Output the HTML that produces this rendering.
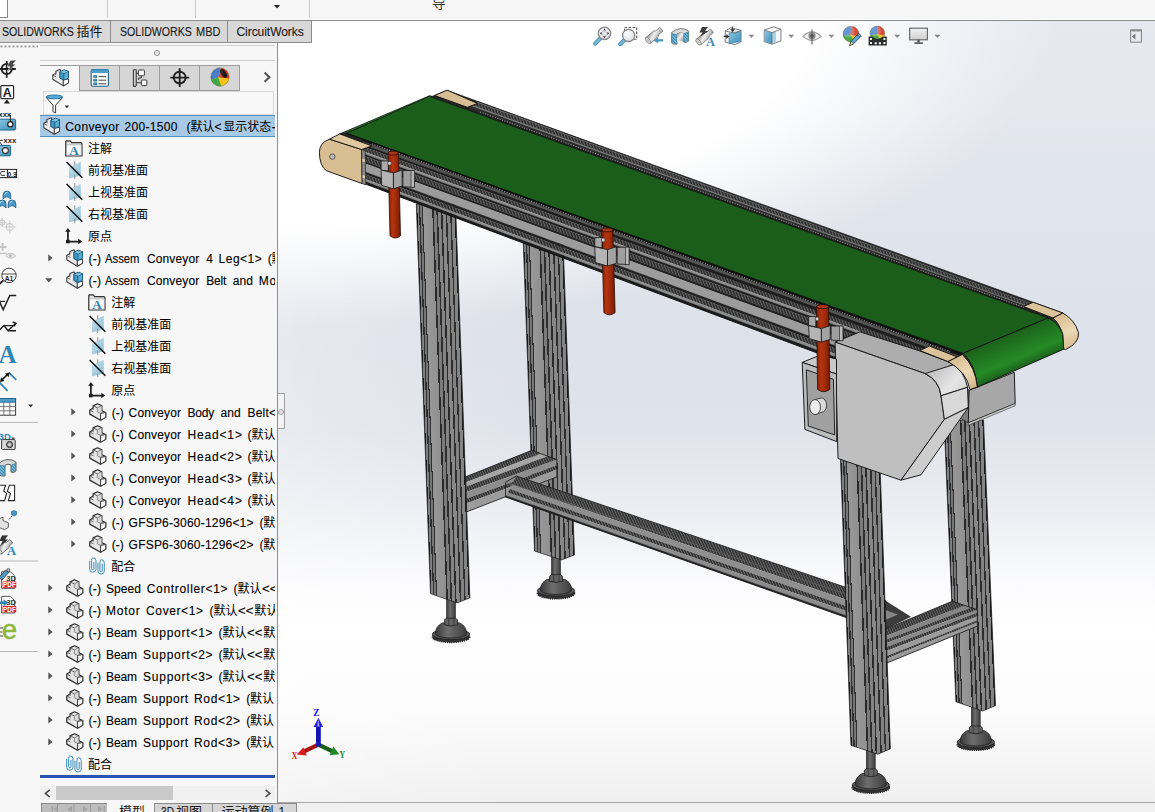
<!DOCTYPE html>
<html><head><meta charset="utf-8"><title>SOLIDWORKS</title><style>
html,body{margin:0;padding:0}
html{overflow:hidden;width:1155px;height:812px}
body{width:1155px;height:812px;overflow:hidden;position:relative;background:#f7f7f7;font-family:"Liberation Sans",sans-serif;font-size:12px}
.t{position:absolute;white-space:pre;line-height:normal;transform-origin:0 50%;-webkit-text-stroke:0.12px currentColor}
.a{position:absolute}
svg{position:absolute;overflow:visible}
</style></head><body><div class="a" style="left:0;top:0;width:1155px;height:812px;overflow:hidden">
<svg width="0" height="0" style="left:0;top:0"><defs>
<symbol id="i-part" viewBox="0 0 18 19" overflow="visible">
 <path d="M0.8 7.2 L4.2 5.2 L4.2 3 L8.8 0.8 L13.2 2.8 L13.2 8 L17.2 9.8 L17.2 14.6 L11.8 17.8 L0.8 11.4Z" fill="#e6e6e6" stroke="#2c2c2c" stroke-width="1.3" stroke-linejoin="round"/>
 <path d="M4.2 3 L8.6 5 L13.2 2.8 M8.6 5 L8.6 9 L12 10.6 L17.2 9.8 M12 10.6 L11.8 17.8 M0.8 7.2 L4.6 9.2 M4.2 5.2L4.2 7" fill="none" stroke="#555" stroke-width="0.9"/>
 <path d="M8.6 5 L13.2 2.8 L13.2 8 L12 10.6 L8.6 9Z" fill="#d2d2d2" opacity=".7"/>
 <path d="M12 10.6L17.2 9.8L17.2 14.6L11.8 17.8Z" fill="#f6f6f6"/>
 <path d="M12 10.6L17.2 9.8L17.2 14.6L11.8 17.8Z" fill="none" stroke="#3c3c3c" stroke-width="1"/>
</symbol>
<symbol id="i-asm" viewBox="0 0 18 19" overflow="visible">
 <path d="M0.8 6.6 L4 4.6 L4 2.6 L8 0.9 L9 1.3 L9 9 L17 11 L17 14.6 L11.6 17.8 L0.8 11Z" fill="#ededed" stroke="#3c3c3c" stroke-width="1.1" stroke-linejoin="round"/>
 <path d="M11.6 11.2 L11.6 17.8 M0.8 6.6 L4.4 8.6 M4 4.6 L4 6.4" fill="none" stroke="#555" stroke-width="0.9"/>
 <path d="M11.6 11.4L17 10.6L17 14.6L11.6 17.8Z" fill="#fafafa" stroke="#3c3c3c" stroke-width="1"/>
 <path d="M8 3.4 L12.6 1.2 L17 2.8 L17 9.6 L12.2 11.8 L8 9.8Z" fill="#3f97c4" stroke="#17506f" stroke-width="1" stroke-linejoin="round"/>
 <path d="M8 3.4 L12.4 5.2 L17 2.8 M12.4 5.2 L12.2 11.8" fill="none" stroke="#17506f" stroke-width="0.9"/>
 <path d="M8.4 3.5 L12.6 1.7 L16.4 2.9 L12.4 4.8Z" fill="#7cc3e2"/>
 <path d="M12.8 5.6L16.6 3.6L16.6 9.3L12.7 11.1Z" fill="#5aaed6"/>
</symbol>
<symbol id="i-folder" viewBox="0 0 19 18" overflow="visible">
 <path d="M0.8 16.4 L0.8 1.6 Q0.8 0.8 1.6 0.8 L5.4 0.8 L6.8 2.6 L16 2.6 Q17.4 2.6 17.4 4 L17.4 16.4Z" fill="#e2e2e2" stroke="#333" stroke-width="1.3" stroke-linejoin="round"/>
 <path d="M1.6 5 L16.8 5 L16.8 15.8 L1.6 15.8Z" fill="#f9f9f9" stroke="#9a9a9a" stroke-width="0.6"/>
 <text x="9.2" y="15.2" font-family="Liberation Serif" font-weight="bold" font-size="13.5" text-anchor="middle" fill="#2f84ad">A</text>
</symbol>
<symbol id="i-plane" viewBox="0 0 18 19" overflow="visible">
 <defs><linearGradient id="pg" x1="0" y1="0" x2="1" y2="1"><stop offset="0" stop-color="#c4e0ec"/><stop offset="1" stop-color="#8fc0d6"/></linearGradient></defs>
 <path d="M3 6.8 L15.2 0.8 L15.2 14.8 L3 18Z" fill="url(#pg)"/>
 <path d="M9 0.2V4.4M9 14V18.4" stroke="#8a8a8a" stroke-width="1"/>
 <path d="M0.6 1 L16.8 17.2" stroke="#111" stroke-width="1.5"/>
</symbol>
<symbol id="i-origin" viewBox="0 0 18 18" overflow="visible">
 <path d="M3 1 L5.8 5 H3.9 V14.2 H13.6 V12.2 L17.8 15 L13.6 17.8 V15.9 H2.1 V5 H0.2Z" fill="#1e1e1e"/>
 <rect x="1" y="13.2" width="3.8" height="3.6" fill="#1e1e1e"/>
</symbol>
<symbol id="i-clips" viewBox="0 0 17 19" overflow="visible">
 <g fill="none" stroke="#2580b2" stroke-width="0.95">
  <path d="M5.2 5.2 V12.4 Q5.2 13.6 4 13.6 Q2.8 13.6 2.8 12.4 V3.8 Q2.8 0.8 4.1 0.8 Q7.4 0.8 7.4 3.8 V13.2 Q7.4 16 4 16 Q0.7 16 0.7 13.2 V4"/>
  <path d="M14 7.2 V14.4 Q14 15.6 12.8 15.6 Q11.6 15.6 11.6 14.4 V5.8 Q11.6 2.8 12.9 2.8 Q16.2 2.8 16.2 5.8 V15.2 Q16.2 18 12.8 18 Q9.5 18 9.5 15.2 V6"/>
 </g>
</symbol>

<clipPath id="treeclip"><rect x="40" y="100" width="235" height="680"/></clipPath>
<clipPath id="botclip"><rect x="0" y="803" width="400" height="9"/></clipPath>
</defs></svg>
<div class="a" style="left:0px;top:0px;width:1155px;height:20px;background:#f6f6f6;"></div><div class="a" style="left:0px;top:0px;width:7px;height:17px;background:#ffffff;border-right:1px solid #8a8a8a;border-bottom:1px solid #8a8a8a;"></div><div class="a" style="left:107px;top:0px;width:1px;height:18px;background:#c9c9c9;"></div><div class="a" style="left:195px;top:0px;width:1px;height:18px;background:#c9c9c9;"></div><div class="a" style="left:309px;top:0px;width:1px;height:18px;background:#c9c9c9;"></div><svg style="left:274px;top:5px" width="6" height="4"><path d="M0 0h6l-3 3.5z" fill="#222"/></svg><div class="a" style="left:0px;top:19px;width:1155px;height:1px;background:#fdfdfd;"></div><div class="a" style="left:0px;top:20px;width:1155px;height:1px;background:#8c8c8c;"></div><svg style="left:0;top:45px" width="38" height="3"><path d="M0.5 1.5H38" stroke="#9a9a9a" stroke-width="2" stroke-dasharray="2 2"/></svg><div class="a" style="left:40px;top:45px;width:235px;height:1px;background:#d0d0d0;"></div><div class="a" style="left:40px;top:60px;width:235px;height:1px;background:#cfcfcf;"></div><svg style="left:153px;top:49px" width="8" height="8"><circle cx="4" cy="4" r="2.6" fill="#e4e4e4" stroke="#9c9c9c" stroke-width="1"/></svg><div class="a" style="left:40px;top:65px;width:200px;height:1px;background:#9c9c9c;"></div><div class="a" style="left:80px;top:66px;width:160px;height:24px;background:#d6d6d6;"></div><div class="a" style="left:80px;top:90px;width:160px;height:1px;background:#9c9c9c;"></div><div class="a" style="left:79px;top:66px;width:1px;height:25px;background:#9c9c9c;"></div><div class="a" style="left:119px;top:66px;width:1px;height:25px;background:#9c9c9c;"></div><div class="a" style="left:159px;top:66px;width:1px;height:25px;background:#9c9c9c;"></div><div class="a" style="left:199px;top:66px;width:1px;height:25px;background:#9c9c9c;"></div><div class="a" style="left:239px;top:66px;width:1px;height:25px;background:#9c9c9c;"></div><div class="a" style="left:43px;top:91px;width:231px;height:24px;background:#f8f8f8;border:1px solid #d9d9d9;box-sizing:border-box;"></div><div class="a" style="left:277px;top:43px;width:1px;height:760px;background:#8e8e8e;"></div><div class="a" style="left:40px;top:115px;width:235px;height:22px;background:#a9cae6;border-top:1px solid #4f93c8;border-bottom:1px solid #4f93c8;box-sizing:border-box;"></div><div class="a" style="left:40px;top:775px;width:235px;height:3px;background:#2a52b4;"></div><div class="a" style="left:40px;top:786px;width:235px;height:14px;background:#f0f0f0;"></div><div class="a" style="left:56px;top:786px;width:117px;height:14px;background:#c9c9c9;"></div><svg style="left:44px;top:789px" width="8" height="9"><path d="M5.6 0.8 L1.4 4.4 L5.6 8" fill="none" stroke="#4a4a4a" stroke-width="1.6"/></svg><svg style="left:264px;top:789px" width="8" height="9"><path d="M1.6 0.8 L5.8 4.4 L1.6 8" fill="none" stroke="#4a4a4a" stroke-width="1.6"/></svg><div class="a" style="left:278px;top:802px;width:877px;height:1px;background:#a6a6a6;"></div><div class="a" style="left:278px;top:803px;width:877px;height:9px;background:#f0f0f0;"></div><div class="a" style="left:41px;top:803px;width:66px;height:9px;background:#bdbdbd;border-top:1px solid #8a8a8a;border-left:1px solid #8a8a8a;box-sizing:border-box;"></div><svg style="left:41px;top:803px" width="66" height="9"><g fill="#a3a3a3"><path d="M12 3v6h-1.5v-6zM17 3v6l-4.5-3zM31 3v6l-5-3zM42 3l5 3-5 3zM57 3l4.5 3l-4.5 3zM62.5 3h1.5v6h-1.5z"/></g><path d="M16.5 0V9M33 0V9M49.5 0V9" stroke="#9a9a9a"/></svg><div class="a" style="left:107px;top:803px;width:47px;height:9px;background:#f7f7f7;"></div><div class="a" style="left:154px;top:803px;width:59px;height:9px;background:#d6d6d6;border:1px solid #8c8c8c;border-bottom:none;box-sizing:border-box;"></div><div class="a" style="left:213px;top:803px;width:84px;height:9px;background:#d6d6d6;border:1px solid #8c8c8c;border-left:none;border-bottom:none;box-sizing:border-box;"></div><span class="t" style="left:160.5px;top:804.74px;font-size:12px;color:#1a1a1a;transform:scaleX(0.8473);">3D</span><span class="t" style="left:278.5px;top:804.74px;font-size:12px;color:#1a1a1a;">1</span>
<div class="a" style="left:278px;top:21px;width:877px;height:781px;
background:
 radial-gradient(ellipse 780px 305px at 0 0, #fff 0%, #fff 68%, rgba(255,255,255,0) 100%),
 linear-gradient(90deg, rgba(255,255,255,.28) 0%, rgba(255,255,255,.14) 12%, rgba(255,255,255,0) 28%),
 linear-gradient(180deg,#e6e9f0 0%,#e1e5ed 20%,#dde1ea 42%,#dfe3eb 52%,#eceef3 63%,#fbfbfd 72%,#ffffff 78%,#fcfcfc 88%,#f0f0f0 100%);"></div><div class="a" style="left:278px;top:393px;width:7px;height:36px;background:#f3f3f3;border:1px solid #a0a0a0;border-left:none;box-sizing:border-box;"></div><svg style="left:277px;top:408px" width="8" height="8"><circle cx="4" cy="4" r="2.4" fill="#e8e8e8" stroke="#9c9c9c" stroke-width="1"/></svg>
<svg style="left:0;top:0" width="1155" height="812" viewBox="0 0 1155 812"><defs><linearGradient id="legg" x1="0" y1="0" x2="1" y2="0"><stop offset="0" stop-color="#1a1a1a"/><stop offset="0.022" stop-color="#1a1a1a"/><stop offset="0.022" stop-color="#808080"/><stop offset="0.062" stop-color="#808080"/><stop offset="0.062" stop-color="#303030"/><stop offset="0.095" stop-color="#303030"/><stop offset="0.095" stop-color="#767676"/><stop offset="0.138" stop-color="#767676"/><stop offset="0.138" stop-color="#2e2e2e"/><stop offset="0.165" stop-color="#2e2e2e"/><stop offset="0.165" stop-color="#989898"/><stop offset="0.4" stop-color="#909090"/><stop offset="0.4" stop-color="#2a2a2a"/><stop offset="0.438" stop-color="#2a2a2a"/><stop offset="0.438" stop-color="#7c7c7c"/><stop offset="0.505" stop-color="#7c7c7c"/><stop offset="0.505" stop-color="#2e2e2e"/><stop offset="0.545" stop-color="#2e2e2e"/><stop offset="0.545" stop-color="#848484"/><stop offset="0.62" stop-color="#848484"/><stop offset="0.62" stop-color="#2a2a2a"/><stop offset="0.658" stop-color="#2a2a2a"/><stop offset="0.658" stop-color="#888888"/><stop offset="0.74" stop-color="#888888"/><stop offset="0.74" stop-color="#2e2e2e"/><stop offset="0.778" stop-color="#2e2e2e"/><stop offset="0.778" stop-color="#828282"/><stop offset="0.855" stop-color="#828282"/><stop offset="0.855" stop-color="#2e2e2e"/><stop offset="0.89" stop-color="#2e2e2e"/><stop offset="0.89" stop-color="#848484"/><stop offset="0.968" stop-color="#848484"/><stop offset="0.968" stop-color="#1a1a1a"/><stop offset="1" stop-color="#1a1a1a"/></linearGradient><linearGradient id="rodg" x1="0" y1="0" x2="1" y2="0"><stop offset="0" stop-color="#801f05"/><stop offset="0.35" stop-color="#b43510"/><stop offset="0.6" stop-color="#a42c0b"/><stop offset="1" stop-color="#741b04"/></linearGradient><linearGradient id="beltend" gradientUnits="userSpaceOnUse" x1="1003" y1="336" x2="1018" y2="371"><stop offset="0" stop-color="#1b5f1b"/><stop offset="0.45" stop-color="#227d22"/><stop offset="0.7" stop-color="#258a25"/><stop offset="1" stop-color="#1a5a1a"/></linearGradient><linearGradient id="capg" gradientUnits="userSpaceOnUse" x1="1060" y1="316" x2="1074" y2="348"><stop offset="0" stop-color="#d8bd92"/><stop offset="0.5" stop-color="#ecd9b6"/><stop offset="1" stop-color="#d3b88d"/></linearGradient><linearGradient id="capg2" gradientUnits="userSpaceOnUse" x1="958" y1="358" x2="972" y2="388"><stop offset="0" stop-color="#d8bd92"/><stop offset="0.5" stop-color="#ecd9b6"/><stop offset="1" stop-color="#d3b88d"/></linearGradient><linearGradient id="chamf" gradientUnits="userSpaceOnUse" x1="935" y1="370" x2="962" y2="395"><stop offset="0" stop-color="#c4c4c4"/><stop offset="0.6" stop-color="#e6e6e6"/><stop offset="1" stop-color="#d2d2d2"/></linearGradient><linearGradient id="footg" x1="0" y1="0" x2="1" y2="0"><stop offset="0" stop-color="#3a3a3a"/><stop offset="0.4" stop-color="#6e6e6e"/><stop offset="1" stop-color="#3c3c3c"/></linearGradient><pattern id="hx" width="2.6" height="2.6" patternUnits="userSpaceOnUse" patternTransform="rotate(-20)"><rect width="2.6" height="2.6" fill="#2b2b2b"/><rect width="1.1" height="2.6" fill="#626262"/></pattern><pattern id="hx2" width="2.4" height="2.4" patternUnits="userSpaceOnUse" patternTransform="rotate(-25)"><rect width="2.4" height="2.4" fill="#2e2e2e"/><rect width="1.0" height="2.4" fill="#6a6a6a"/></pattern><clipPath id="vpclip"><rect x="278" y="21" width="877" height="781"/></clipPath></defs><g clip-path="url(#vpclip)"><rect x="971.4" y="705" width="8.8" height="23.6" fill="url(#footg)" stroke="#1a1a1a" stroke-width="0.6"/><ellipse cx="975.8" cy="744.7" rx="18.7" ry="5.6" fill="#333" stroke="#222" stroke-width="1.4" stroke-dasharray="1.2 0.9"/><ellipse cx="975.8" cy="742.1" rx="18.7" ry="5.4" fill="#5c5c5c" stroke="#1c1c1c" stroke-width="0.8"/><path d="M960.1999999999999,741.5 Q960.1999999999999,734.1 967.1999999999999,730.7 L984.4,730.7 Q991.4,734.1 991.4,741.5 A15.6,4.4 0 0 1 960.1999999999999,741.5Z" fill="url(#footg)" stroke="#1c1c1c" stroke-width="0.8"/><path d="M969.3,727.6 L971.4,726.0 H980.1999999999999 L982.3,727.6 V732.6 Q975.8,735.0 969.3,732.6Z" fill="#626262" stroke="#1c1c1c" stroke-width="0.8"/><path d="M973.4,726.8000000000001V733.8000000000001M978.8,726.8000000000001V733.6" stroke="#2a2a2a" stroke-width="0.6"/><g transform="matrix(1 0 0.042 1 926.46 0)"><polygon points="0,420 39.4,420 39.4,705.6 26.4,711.0 0,701.7" fill="url(#legg)" stroke="#1a1a1a" stroke-width="0.7"/></g><rect x="551.6" y="554" width="8.8" height="23.2" fill="url(#footg)" stroke="#1a1a1a" stroke-width="0.6"/><ellipse cx="556.0" cy="593.3000000000001" rx="18.7" ry="5.6" fill="#333" stroke="#222" stroke-width="1.4" stroke-dasharray="1.2 0.9"/><ellipse cx="556.0" cy="590.7" rx="18.7" ry="5.4" fill="#5c5c5c" stroke="#1c1c1c" stroke-width="0.8"/><path d="M540.4,590.1 Q540.4,582.7 547.4,579.3000000000001 L564.6,579.3000000000001 Q571.6,582.7 571.6,590.1 A15.6,4.4 0 0 1 540.4,590.1Z" fill="url(#footg)" stroke="#1c1c1c" stroke-width="0.8"/><path d="M549.5,576.2 L551.6,574.6 H560.4 L562.5,576.2 V581.2 Q556.0,583.6 549.5,581.2Z" fill="#626262" stroke="#1c1c1c" stroke-width="0.8"/><path d="M553.6,575.4000000000001V582.4000000000001M559.0,575.4000000000001V582.2" stroke="#2a2a2a" stroke-width="0.6"/><g transform="matrix(1 0 0.0365 1 514.43 0)"><polygon points="0,243 39.8,243 39.8,554.9 26.7,559.9 0,551.0" fill="url(#legg)" stroke="#1a1a1a" stroke-width="0.7"/></g><polygon points="465.7,476.8 531.9,450.3 540.9,453.7 465.7,482.4" fill="url(#hx2)"/><polygon points="465.7,482.4 540.9,453.7 547.9,456.3 465.7,486.7" fill="#a6a6a6" stroke="#a6a6a6" stroke-width="0.3"/><polygon points="465.7,486.7 547.9,456.3 556.9,459.6 465.7,492.3" fill="url(#hx2)"/><polygon points="465.7,492.3 556.9,459.6 556.9,465.5 465.7,499.1" fill="#8e8e8e" stroke="#8e8e8e" stroke-width="0.3"/><polygon points="465.7,499.1 556.9,465.5 556.9,469.6 465.7,503.8" fill="url(#hx2)"/><polygon points="465.7,503.8 556.9,469.6 556.9,476.8 465.7,512.2" fill="#9c9c9c" stroke="#9c9c9c" stroke-width="0.3"/><polygon points="465.7,476.8 531.9,450.3 556.9,459.6 556.9,476.8 465.7,512.2" fill="none" stroke="#141414" stroke-width="0.8" stroke-linejoin="round" /><polygon points="516.4,476.0 886.0,600.9 886.0,613.5 511.9,484.6" fill="url(#hx2)"/><polygon points="511.9,484.6 886.0,613.5 886.0,619.9 509.6,489.0" fill="#8f8f8f" stroke="#8f8f8f" stroke-width="0.3"/><polygon points="509.6,489.0 886.0,619.9 886.0,625.1 507.8,492.6" fill="url(#hx2)"/><polygon points="507.8,492.6 886.0,625.1 886.0,629.7 506.2,495.7" fill="#8c8c8c" stroke="#8c8c8c" stroke-width="0.3"/><polygon points="506.2,495.7 886.0,629.7 886.0,631.6 505.5,497.0" fill="#222" stroke="#222" stroke-width="0.3"/><polyline points="886.0,600.9 516.4,476.0 505.5,482.2 505.5,497.0 886.0,631.6" fill="none" stroke="#1a1a1a" stroke-width="0.8"/><line x1="505.5" y1="482.2" x2="886" y2="607.1" stroke="#6a6a6a" stroke-width="0.6"/><polygon points="885.3,601.0 910.3,616.8 885.3,629.0" fill="#3c3c3c" stroke="#141414" stroke-width="0.6" stroke-linejoin="round" /><polygon points="885.3,610.0 898.0,614.5 885.3,620.0" fill="#858585" /><polygon points="885.3,629.2 952.3,601.2 964.8,605.4 885.3,636.3" fill="url(#hx2)"/><polygon points="885.3,636.3 964.8,605.4 971.3,607.7 885.3,640.0" fill="#858585" stroke="#858585" stroke-width="0.3"/><polygon points="885.3,640.0 971.3,607.7 977.3,609.7 885.3,643.4" fill="url(#hx2)"/><polygon points="885.3,643.4 977.3,609.7 977.3,613.0 885.3,647.4" fill="#8a8a8a" stroke="#8a8a8a" stroke-width="0.3"/><polygon points="885.3,647.4 977.3,613.0 977.3,616.3 885.3,651.5" fill="url(#hx2)"/><polygon points="885.3,651.5 977.3,616.3 977.3,620.4 885.3,656.5" fill="#9c9c9c" stroke="#9c9c9c" stroke-width="0.3"/><polygon points="885.3,656.5 977.3,620.4 977.3,622.6 885.3,659.2" fill="url(#hx2)"/><polygon points="885.3,659.2 977.3,622.6 977.3,626.2 885.3,663.6" fill="#9a9a9a" stroke="#9a9a9a" stroke-width="0.3"/><polygon points="885.3,629.2 952.3,601.2 977.3,609.7 977.3,626.1 885.3,663.6" fill="none" stroke="#141414" stroke-width="0.8" stroke-linejoin="round" /><rect x="446.6" y="597" width="8.8" height="23.8" fill="url(#footg)" stroke="#1a1a1a" stroke-width="0.6"/><ellipse cx="451.0" cy="636.9" rx="18.7" ry="5.6" fill="#333" stroke="#222" stroke-width="1.4" stroke-dasharray="1.2 0.9"/><ellipse cx="451.0" cy="634.3" rx="18.7" ry="5.4" fill="#5c5c5c" stroke="#1c1c1c" stroke-width="0.8"/><path d="M435.4,633.6999999999999 Q435.4,626.3 442.4,622.9 L459.6,622.9 Q466.6,626.3 466.6,633.6999999999999 A15.6,4.4 0 0 1 435.4,633.6999999999999Z" fill="url(#footg)" stroke="#1c1c1c" stroke-width="0.8"/><path d="M444.5,619.8 L446.6,618.1999999999999 H455.4 L457.5,619.8 V624.8 Q451.0,627.1999999999999 444.5,624.8Z" fill="#626262" stroke="#1c1c1c" stroke-width="0.8"/><path d="M448.6,619.0V626.0M454.0,619.0V625.8" stroke="#2a2a2a" stroke-width="0.6"/><g transform="matrix(1 0 0.0365 1 408.85 0)"><polygon points="0,204 39.2,204 39.2,597.8 26.3,602.9 0,593.6" fill="url(#legg)" stroke="#1a1a1a" stroke-width="0.7"/></g><rect x="866.4" y="748" width="8.8" height="23.5" fill="url(#footg)" stroke="#1a1a1a" stroke-width="0.6"/><ellipse cx="870.8" cy="787.6" rx="18.7" ry="5.6" fill="#333" stroke="#222" stroke-width="1.4" stroke-dasharray="1.2 0.9"/><ellipse cx="870.8" cy="785.0" rx="18.7" ry="5.4" fill="#5c5c5c" stroke="#1c1c1c" stroke-width="0.8"/><path d="M855.1999999999999,784.4 Q855.1999999999999,777.0 862.1999999999999,773.6 L879.4,773.6 Q886.4,777.0 886.4,784.4 A15.6,4.4 0 0 1 855.1999999999999,784.4Z" fill="url(#footg)" stroke="#1c1c1c" stroke-width="0.8"/><path d="M864.3,770.5 L866.4,768.9 H875.1999999999999 L877.3,770.5 V775.5 Q870.8,777.9 864.3,775.5Z" fill="#626262" stroke="#1c1c1c" stroke-width="0.8"/><path d="M868.4,769.7V776.7M873.8,769.7V776.5" stroke="#2a2a2a" stroke-width="0.6"/><g transform="matrix(1 0 0.0365 1 823.74 0)"><polygon points="0,440 39.3,440 39.3,748.9 26.3,754.2 0,745.3" fill="url(#legg)" stroke="#1a1a1a" stroke-width="0.7"/></g><polygon points="955.0,380.0 969.1,390.3 968.3,422.9 955.0,415.0" fill="#7e7e7e" stroke="#141414" stroke-width="0.6" stroke-linejoin="round" /><polygon points="969.1,390.3 1014.3,372.3 1015.2,403.5 968.3,422.9" fill="#a7a7a7" stroke="#141414" stroke-width="0.95" stroke-linejoin="round" /><polygon points="968.3,422.9 1015.2,403.5 1015.2,405.8 968.3,425.2" fill="#cfcfcf" stroke="#141414" stroke-width="0.5" stroke-linejoin="round" /><polygon points="339.6,134.2 447.0,90.3 1062.9,313.0 950.0,361.5" fill="#262626" stroke="#141414" stroke-width="0.6" stroke-linejoin="round" /><polygon points="477.5,101.5 1033.0,303.6 1031.7,304.2 476.1,102.5" fill="#777" stroke="#777" stroke-width="0.3"/><polygon points="476.1,102.5 1031.7,304.2 1028.0,306.0 472.2,105.1" fill="url(#hx)"/><polygon points="472.2,105.1 1028.0,306.0 1026.7,306.6 470.8,106.1" fill="#808080" stroke="#808080" stroke-width="0.3"/><polygon points="470.8,106.1 1026.7,306.6 1023.4,308.2 467.4,108.4" fill="#2e2e2e" stroke="#2e2e2e" stroke-width="0.3"/><polygon points="477.5,101.5 1033.0,303.6 1023.4,308.2 467.4,108.4" fill="none" stroke="#1a1a1a" stroke-width="0.8"/><polygon points="339.6,134.0 429.8,95.6 432.5,96.6 347.6,132.6" fill="#2b7b2b" stroke="#141414" stroke-width="0.7" stroke-linejoin="round" /><polygon points="346.5,133.3 429.4,96.3 1048.0,318.0 963.3,353.3" fill="#1b5e1b" stroke="#141414" stroke-width="0.8" stroke-linejoin="round" /><path d="M1046,318.4 L1054,317.6 Q1066,330 1065,349.4 L1061,349 Z" fill="#3a3a3a" /><path d="M961,354.6 L966,352.6 Q978,368 978.6,387.6 L975,388.4Z" fill="#3a3a3a" /><path d="M963.3,353.3 L1048,318 Q1058.5,322.5 1062.9,334.4 L1063.7,349.2 L977.3,387 Q976,366 963.3,353.3Z" fill="url(#beltend)" stroke="#141414" stroke-width="0.95" stroke-linejoin="round" /><polygon points="434.7,95.6 447.1,90.1 477.5,103.4 467.4,107.3" fill="#d7bd93" stroke="#141414" stroke-width="0.95" stroke-linejoin="round" /><polygon points="1023.4,306.5 1033.2,302.3 1062.9,313.0 1053.0,318.0" fill="#dcc39a" stroke="#141414" stroke-width="0.95" stroke-linejoin="round" /><path d="M1053,318 L1062.9,313 Q1075,320 1078.5,332.8 Q1079.5,343 1065.5,349.6 L1063.7,348.8 L1062.9,334.4 Q1059,323 1053,318Z" fill="url(#capg)" stroke="#141414" stroke-width="0.95" stroke-linejoin="round" /><polygon points="362.8,139.1 962.0,354.0 962.0,356.9 362.8,141.6" fill="#161616" stroke="#161616" stroke-width="0.3"/><polygon points="362.8,141.6 962.0,356.9 962.0,360.1 362.8,144.2" fill="#545454" stroke="#545454" stroke-width="0.3"/><polygon points="362.8,144.2 962.0,360.1 962.0,363.0 362.8,146.6" fill="#1e1e1e" stroke="#1e1e1e" stroke-width="0.3"/><polygon points="362.8,146.6 962.0,363.0 962.0,368.6 362.8,151.2" fill="url(#hx)"/><polygon points="362.8,151.2 962.0,368.6 962.0,371.2 362.8,153.4" fill="#909090" stroke="#909090" stroke-width="0.3"/><polygon points="362.8,153.4 962.0,371.2 962.0,373.9 362.8,155.6" fill="#222" stroke="#222" stroke-width="0.3"/><polygon points="362.8,155.6 962.0,373.9 962.0,379.7 362.8,160.4" fill="url(#hx)"/><polygon points="362.8,160.4 962.0,379.7 962.0,382.7 362.8,162.8" fill="#222" stroke="#222" stroke-width="0.3"/><polygon points="362.8,162.8 962.0,382.7 962.0,392.5 362.8,170.9" fill="#9c9c9c" stroke="#9c9c9c" stroke-width="0.3"/><polygon points="362.8,170.9 962.0,392.5 962.0,395.4 362.8,173.4" fill="#222" stroke="#222" stroke-width="0.3"/><polygon points="362.8,173.4 962.0,395.4 962.0,401.3 362.8,178.2" fill="url(#hx)"/><polygon points="362.8,178.2 962.0,401.3 962.0,404.2 362.8,180.6" fill="#8c8c8c" stroke="#8c8c8c" stroke-width="0.3"/><polygon points="362.8,180.6 962.0,404.2 962.0,407.1 362.8,183.0" fill="#1c1c1c" stroke="#1c1c1c" stroke-width="0.3"/><line x1="362.8" y1="183.0" x2="840" y2="361.5" stroke="#111" stroke-width="0.9"/><line x1="346.5" y1="133.3" x2="963" y2="354.3" stroke="#0e0e0e" stroke-width="1"/><line x1="372" y1="144.0" x2="950" y2="351.7" stroke="#8a8a8a" stroke-width="1.3" stroke-dasharray="1.1 1.5"/><line x1="480" y1="112.1" x2="1024" y2="307.4" stroke="#8a8a8a" stroke-width="1.1" stroke-dasharray="1.1 1.5"/><path d="M329.5,139.2 Q319.4,142.5 319.4,152.5 Q319.6,166 326.5,170.8 L362.2,183.6 L361.6,149.5 Z" fill="#d9bd93" stroke="#141414" stroke-width="0.95" stroke-linejoin="round" /><polygon points="329.5,139.2 339.8,133.9 372.0,146.0 361.6,149.5" fill="#e0c8a0" stroke="#141414" stroke-width="0.95" stroke-linejoin="round" /><circle cx="332.3" cy="156.6" r="2.7" fill="#b9b9b9" stroke="#444" stroke-width="0.8"/><polygon points="361.6,149.5 365.2,150.8 365.8,185.0 362.2,183.6" fill="#8a8a8a" stroke="#141414" stroke-width="0.6" stroke-linejoin="round" /><polygon points="362.4,158.6 364.8,159.4 364.8,162.2 362.4,161.4" fill="#e2cfa6" /><polygon points="362.6,175.0 365.0,175.8 365.0,178.6 362.6,177.8" fill="#e2cfa6" /><polygon points="835.1,342.1 860.0,331.9 920.0,351.0 948.0,361.6 953.5,364.7 928.6,374.8" fill="#adadad" stroke="#141414" stroke-width="0.95" stroke-linejoin="round" /><path d="M835.1,342.1 L925,373.6 Q939,380 941,395.8 L944.4,419.3 L901,480.2 L838,458.5Z" fill="#bfbfbf" stroke="#141414" stroke-width="0.95" stroke-linejoin="round" /><path d="M925,373.6 L953.5,364.7 Q964.5,372 967.5,387.3 L941,395.8 Q939,380 925,373.6Z" fill="url(#chamf)" stroke="#141414" stroke-width="0.95" stroke-linejoin="round" /><polygon points="941.0,395.8 967.5,387.3 968.3,407.5 944.4,419.3" fill="#d8d8d8" stroke="#141414" stroke-width="0.95" stroke-linejoin="round" /><polygon points="944.4,419.3 968.3,407.5 921.0,474.8 901.0,480.2" fill="#cdcdcd" stroke="#141414" stroke-width="0.95" stroke-linejoin="round" /><polygon points="920.0,350.6 929.3,346.0 957.4,356.9 948.0,361.6" fill="#dcc39a" stroke="#141414" stroke-width="0.95" stroke-linejoin="round" /><path d="M948,361.6 L962.3,354.4 Q975.5,367 977.3,387 L969.9,389.6 Q967,372 948,361.6Z" fill="url(#capg2)" stroke="#141414" stroke-width="0.95" stroke-linejoin="round" /><polygon points="802.2,362.4 820.0,355.2 836.5,359.0 836.5,374.0" fill="#c9c9c9" stroke="#141414" stroke-width="0.95" stroke-linejoin="round" /><polygon points="802.2,362.4 836.5,374.0 836.7,441.6 804.9,429.4" fill="#bcbcbc" stroke="#141414" stroke-width="0.95" stroke-linejoin="round" /><polygon points="806.3,369.8 833.4,379.3 834.7,434.9 808.3,426.0" fill="#a0a0a0" stroke="#141414" stroke-width="0.9" stroke-linejoin="round" /><path d="M815.1,399.6 L821.4,398 A5.2,7.2 0 0 1 821.4,412.4 L815.1,414.6Z" fill="#d9d9d9" stroke="#222" stroke-width="0.8"/><ellipse cx="815.1" cy="407.1" rx="5.4" ry="7.5" fill="#ececec" stroke="#222" stroke-width="0.8"/><path d="M388.0,153.1 L390.0,235.8 Q395.2,240.3 400.5,235.8 L398.5,153.1Z" fill="url(#rodg)" stroke="#2a0c03" stroke-width="0.8"/><ellipse cx="393.2" cy="153.1" rx="5.2" ry="2.0" fill="#a8381a" stroke="#2a0c03" stroke-width="0.8"/><polygon points="381.1,160.9 388.3,160.9 388.3,171.1 381.1,170.1" fill="#a9a9a9" stroke="#141414" stroke-width="0.8" stroke-linejoin="round" /><circle cx="389.5" cy="163.3" r="1.9" fill="#d4d4d4" stroke="#333" stroke-width="0.6"/><polygon points="402.9,170.5 414.4,170.5 414.4,187.4 402.9,186.8" fill="#9e9e9e" stroke="#141414" stroke-width="0.8" stroke-linejoin="round" /><polygon points="411.1,170.5 414.4,170.5 414.4,187.4 411.1,187.3" fill="#bdbdbd" stroke="#141414" stroke-width="0.6" stroke-linejoin="round" /><polygon points="393.4,172.9 402.1,170.1 402.1,186.1 393.4,188.8" fill="#a3a3a3" stroke="#141414" stroke-width="0.8" stroke-linejoin="round" /><polygon points="381.1,170.1 393.4,172.9 393.4,188.8 381.7,185.4" fill="#b4b4b4" stroke="#141414" stroke-width="0.8" stroke-linejoin="round" /><path d="M601.6,229.9 L603.9,312.6 Q609.5,317.1 615.1,312.6 L612.8,229.9Z" fill="url(#rodg)" stroke="#2a0c03" stroke-width="0.8"/><ellipse cx="607.2" cy="229.9" rx="5.6" ry="2.0" fill="#a8381a" stroke="#2a0c03" stroke-width="0.8"/><polygon points="594.8,237.6 602.0,237.6 602.0,247.8 594.8,246.8" fill="#a9a9a9" stroke="#141414" stroke-width="0.8" stroke-linejoin="round" /><circle cx="603.2" cy="240.0" r="1.9" fill="#d4d4d4" stroke="#333" stroke-width="0.6"/><polygon points="617.2,247.2 629.0,247.2 629.0,264.6 617.2,264.0" fill="#9e9e9e" stroke="#141414" stroke-width="0.8" stroke-linejoin="round" /><polygon points="625.6,247.2 629.0,247.2 629.0,264.6 625.6,264.5" fill="#bdbdbd" stroke="#141414" stroke-width="0.6" stroke-linejoin="round" /><polygon points="607.5,249.6 616.3,246.8 616.3,263.3 607.5,266.0" fill="#a3a3a3" stroke="#141414" stroke-width="0.8" stroke-linejoin="round" /><polygon points="594.8,246.8 607.5,249.6 607.5,266.0 595.4,262.6" fill="#b4b4b4" stroke="#141414" stroke-width="0.8" stroke-linejoin="round" /><path d="M816.4,306.7 L817.6,389.4 Q823.7,393.9 829.8,389.4 L828.6,306.7Z" fill="url(#rodg)" stroke="#2a0c03" stroke-width="0.8"/><ellipse cx="822.5" cy="306.7" rx="6.1" ry="2.0" fill="#a8381a" stroke="#2a0c03" stroke-width="0.8"/><polygon points="808.6,316.5 815.8,316.5 815.8,326.7 808.6,325.7" fill="#a9a9a9" stroke="#141414" stroke-width="0.8" stroke-linejoin="round" /><circle cx="817.0" cy="318.9" r="1.9" fill="#d4d4d4" stroke="#333" stroke-width="0.6"/><polygon points="831.1,326.1 842.9,326.1 842.9,340.7 831.1,340.1" fill="#9e9e9e" stroke="#141414" stroke-width="0.8" stroke-linejoin="round" /><polygon points="839.5,326.1 842.9,326.1 842.9,340.7 839.5,340.6" fill="#bdbdbd" stroke="#141414" stroke-width="0.6" stroke-linejoin="round" /><polygon points="821.3,328.5 830.2,325.7 830.2,339.4 821.3,342.1" fill="#a3a3a3" stroke="#141414" stroke-width="0.8" stroke-linejoin="round" /><polygon points="808.6,325.7 821.3,328.5 821.3,342.1 809.2,338.7" fill="#b4b4b4" stroke="#141414" stroke-width="0.8" stroke-linejoin="round" /></g></svg>
<div class="a" style="left:0px;top:21px;width:311px;height:21px;background:#d8d8d8;"></div><div class="a" style="left:0px;top:42px;width:312px;height:1px;background:#8c8c8c;"></div><div class="a" style="left:110px;top:21px;width:1px;height:22px;background:#8c8c8c;"></div><div class="a" style="left:227px;top:21px;width:1px;height:22px;background:#8c8c8c;"></div><div class="a" style="left:311px;top:21px;width:1px;height:22px;background:#8c8c8c;"></div><span class="t" style="left:2.0px;top:25.04px;font-size:12px;color:#1a1a1a;transform:scaleX(0.8825);">SOLIDWORKS</span><span class="t" style="left:119.5px;top:25.04px;font-size:12px;color:#1a1a1a;transform:scaleX(0.8825);">SOLIDWORKS</span><span class="t" style="left:195.5px;top:25.04px;font-size:12px;color:#1a1a1a;transform:scaleX(0.9148);">MBD</span><span class="t" style="left:236.5px;top:25.04px;font-size:12px;color:#1a1a1a;letter-spacing:-0.053px;">CircuitWorks</span>
<div class="a" style="left:0;top:0;width:275px;height:812px;overflow:hidden"><svg style="left:43px;top:117px" width="17.5" height="18.5"><use href="#i-asm" width="17.5" height="18.5"/></svg><span class="t" style="left:65.3px;top:119.84px;font-size:12px;color:#000;letter-spacing:0.377px;">Conveyor</span><span class="t" style="left:124.5px;top:119.84px;font-size:12px;color:#000;letter-spacing:0.326px;">200-1500</span><span class="t" style="left:186.6px;top:119.84px;font-size:12px;color:#000;">(</span><span class="t" style="left:214.6px;top:119.84px;font-size:12px;color:#000;">&lt;</span><span class="t" style="left:271.8px;top:119.84px;font-size:12px;color:#000;">-</span><svg style="left:65px;top:139.8px" width="18.5" height="17.5"><use href="#i-folder" width="18.5" height="17.5"/></svg><svg style="left:65.7px;top:161px" width="17.5" height="18.5"><use href="#i-plane" width="17.5" height="18.5"/></svg><svg style="left:65.7px;top:183px" width="17.5" height="18.5"><use href="#i-plane" width="17.5" height="18.5"/></svg><svg style="left:65.7px;top:205px" width="17.5" height="18.5"><use href="#i-plane" width="17.5" height="18.5"/></svg><svg style="left:65.2px;top:226.8px" width="17.5" height="17.5"><use href="#i-origin" width="17.5" height="17.5"/></svg><svg style="left:66px;top:249px" width="17.5" height="18.5"><use href="#i-asm" width="17.5" height="18.5"/></svg><svg style="left:47.7px;top:253.5px" width="5" height="8"><path d="M0.3 0.3 L4.6 3.9 L0.3 7.5Z" fill="#555"/></svg><span class="t" style="left:88.5px;top:251.84px;font-size:12px;color:#000;letter-spacing:0.200px;">(-)</span><span class="t" style="left:105.3px;top:251.84px;font-size:12px;color:#000;transform:scaleX(0.9376);">Assem</span><span class="t" style="left:146.9px;top:251.84px;font-size:12px;color:#000;letter-spacing:0.134px;">Conveyor</span><span class="t" style="left:206.2px;top:251.84px;font-size:12px;color:#000;">4</span><span class="t" style="left:218.6px;top:251.84px;font-size:12px;color:#000;letter-spacing:0.496px;">Leg&lt;1&gt;</span><span class="t" style="left:267.7px;top:251.84px;font-size:12px;color:#000;">(</span><svg style="left:66px;top:271px" width="17.5" height="18.5"><use href="#i-asm" width="17.5" height="18.5"/></svg><svg style="left:45.0px;top:277.7px" width="8" height="5"><path d="M0.2 0.3 H7.4 L3.8 4.4Z" fill="#555"/></svg><span class="t" style="left:88.5px;top:273.84px;font-size:12px;color:#000;letter-spacing:0.200px;">(-)</span><span class="t" style="left:105.3px;top:273.84px;font-size:12px;color:#000;transform:scaleX(0.9376);">Assem</span><span class="t" style="left:146.9px;top:273.84px;font-size:12px;color:#000;letter-spacing:0.134px;">Conveyor</span><span class="t" style="left:206.2px;top:273.84px;font-size:12px;color:#000;letter-spacing:-0.196px;">Belt</span><span class="t" style="left:232.8px;top:273.84px;font-size:12px;color:#000;letter-spacing:0.084px;">and</span><span class="t" style="left:258.7px;top:273.84px;font-size:12px;color:#000;letter-spacing:0.728px;">Mo</span><svg style="left:88px;top:293.8px" width="18.5" height="17.5"><use href="#i-folder" width="18.5" height="17.5"/></svg><svg style="left:88.7px;top:315px" width="17.5" height="18.5"><use href="#i-plane" width="17.5" height="18.5"/></svg><svg style="left:88.7px;top:337px" width="17.5" height="18.5"><use href="#i-plane" width="17.5" height="18.5"/></svg><svg style="left:88.7px;top:359px" width="17.5" height="18.5"><use href="#i-plane" width="17.5" height="18.5"/></svg><svg style="left:88.2px;top:380.8px" width="17.5" height="17.5"><use href="#i-origin" width="17.5" height="17.5"/></svg><svg style="left:89px;top:403px" width="17.5" height="18.5"><use href="#i-part" width="17.5" height="18.5"/></svg><svg style="left:71.3px;top:407.5px" width="5" height="8"><path d="M0.3 0.3 L4.6 3.9 L0.3 7.5Z" fill="#555"/></svg><span class="t" style="left:111.7px;top:405.84px;font-size:12px;color:#000;letter-spacing:0.000px;">(-)</span><span class="t" style="left:128.6px;top:405.84px;font-size:12px;color:#000;letter-spacing:0.149px;">Conveyor</span><span class="t" style="left:187.5px;top:405.84px;font-size:12px;color:#000;letter-spacing:-0.220px;">Body</span><span class="t" style="left:220.4px;top:405.84px;font-size:12px;color:#000;letter-spacing:0.084px;">and</span><span class="t" style="left:247.5px;top:405.84px;font-size:12px;color:#000;letter-spacing:0.203px;">Belt&lt;</span><svg style="left:89px;top:425px" width="17.5" height="18.5"><use href="#i-part" width="17.5" height="18.5"/></svg><svg style="left:71.3px;top:429.5px" width="5" height="8"><path d="M0.3 0.3 L4.6 3.9 L0.3 7.5Z" fill="#555"/></svg><span class="t" style="left:111.7px;top:427.84px;font-size:12px;color:#000;letter-spacing:0.000px;">(-)</span><span class="t" style="left:128.6px;top:427.84px;font-size:12px;color:#000;letter-spacing:0.149px;">Conveyor</span><span class="t" style="left:187.5px;top:427.84px;font-size:12px;color:#000;letter-spacing:0.835px;">Head&lt;1&gt;</span><span class="t" style="left:247.5px;top:427.84px;font-size:12px;color:#000;">(</span><svg style="left:89px;top:447px" width="17.5" height="18.5"><use href="#i-part" width="17.5" height="18.5"/></svg><svg style="left:71.3px;top:451.5px" width="5" height="8"><path d="M0.3 0.3 L4.6 3.9 L0.3 7.5Z" fill="#555"/></svg><span class="t" style="left:111.7px;top:449.84px;font-size:12px;color:#000;letter-spacing:0.000px;">(-)</span><span class="t" style="left:128.6px;top:449.84px;font-size:12px;color:#000;letter-spacing:0.149px;">Conveyor</span><span class="t" style="left:187.5px;top:449.84px;font-size:12px;color:#000;letter-spacing:0.835px;">Head&lt;2&gt;</span><span class="t" style="left:247.5px;top:449.84px;font-size:12px;color:#000;">(</span><svg style="left:89px;top:469px" width="17.5" height="18.5"><use href="#i-part" width="17.5" height="18.5"/></svg><svg style="left:71.3px;top:473.5px" width="5" height="8"><path d="M0.3 0.3 L4.6 3.9 L0.3 7.5Z" fill="#555"/></svg><span class="t" style="left:111.7px;top:471.84px;font-size:12px;color:#000;letter-spacing:0.000px;">(-)</span><span class="t" style="left:128.6px;top:471.84px;font-size:12px;color:#000;letter-spacing:0.149px;">Conveyor</span><span class="t" style="left:187.5px;top:471.84px;font-size:12px;color:#000;letter-spacing:0.835px;">Head&lt;3&gt;</span><span class="t" style="left:247.5px;top:471.84px;font-size:12px;color:#000;">(</span><svg style="left:89px;top:491px" width="17.5" height="18.5"><use href="#i-part" width="17.5" height="18.5"/></svg><svg style="left:71.3px;top:495.5px" width="5" height="8"><path d="M0.3 0.3 L4.6 3.9 L0.3 7.5Z" fill="#555"/></svg><span class="t" style="left:111.7px;top:493.84px;font-size:12px;color:#000;letter-spacing:0.000px;">(-)</span><span class="t" style="left:128.6px;top:493.84px;font-size:12px;color:#000;letter-spacing:0.149px;">Conveyor</span><span class="t" style="left:187.5px;top:493.84px;font-size:12px;color:#000;letter-spacing:0.835px;">Head&lt;4&gt;</span><span class="t" style="left:247.5px;top:493.84px;font-size:12px;color:#000;">(</span><svg style="left:89px;top:513px" width="17.5" height="18.5"><use href="#i-part" width="17.5" height="18.5"/></svg><svg style="left:71.3px;top:517.5px" width="5" height="8"><path d="M0.3 0.3 L4.6 3.9 L0.3 7.5Z" fill="#555"/></svg><span class="t" style="left:111.7px;top:515.84px;font-size:12px;color:#000;letter-spacing:0.000px;">(-)</span><span class="t" style="left:128.6px;top:515.84px;font-size:12px;color:#000;letter-spacing:0.205px;">GFSP6-3060-1296&lt;1&gt;</span><span class="t" style="left:259.4px;top:515.84px;font-size:12px;color:#000;">(</span><svg style="left:89px;top:535px" width="17.5" height="18.5"><use href="#i-part" width="17.5" height="18.5"/></svg><svg style="left:71.3px;top:539.5px" width="5" height="8"><path d="M0.3 0.3 L4.6 3.9 L0.3 7.5Z" fill="#555"/></svg><span class="t" style="left:111.7px;top:537.84px;font-size:12px;color:#000;letter-spacing:0.000px;">(-)</span><span class="t" style="left:128.6px;top:537.84px;font-size:12px;color:#000;letter-spacing:0.205px;">GFSP6-3060-1296&lt;2&gt;</span><span class="t" style="left:259.4px;top:537.84px;font-size:12px;color:#000;">(</span><svg style="left:89px;top:557px" width="16" height="18"><use href="#i-clips" width="16" height="18"/></svg><svg style="left:66px;top:579px" width="17.5" height="18.5"><use href="#i-part" width="17.5" height="18.5"/></svg><svg style="left:47.7px;top:583.5px" width="5" height="8"><path d="M0.3 0.3 L4.6 3.9 L0.3 7.5Z" fill="#555"/></svg><span class="t" style="left:88.5px;top:581.84px;font-size:12px;color:#000;letter-spacing:0.200px;">(-)</span><span class="t" style="left:106.0px;top:581.84px;font-size:12px;color:#000;letter-spacing:0.074px;">Speed</span><span class="t" style="left:146.7px;top:581.84px;font-size:12px;color:#000;letter-spacing:0.682px;">Controller&lt;1&gt;</span><span class="t" style="left:233.6px;top:581.84px;font-size:12px;color:#000;">(</span><span class="t" style="left:262.2px;top:581.84px;font-size:12px;color:#000;transform:scaleX(1.0988);">&lt;&lt;</span><svg style="left:66px;top:601px" width="17.5" height="18.5"><use href="#i-part" width="17.5" height="18.5"/></svg><svg style="left:47.7px;top:605.5px" width="5" height="8"><path d="M0.3 0.3 L4.6 3.9 L0.3 7.5Z" fill="#555"/></svg><span class="t" style="left:88.5px;top:603.84px;font-size:12px;color:#000;letter-spacing:0.200px;">(-)</span><span class="t" style="left:106.0px;top:603.84px;font-size:12px;color:#000;letter-spacing:0.753px;">Motor</span><span class="t" style="left:146.1px;top:603.84px;font-size:12px;color:#000;letter-spacing:0.600px;">Cover&lt;1&gt;</span><span class="t" style="left:209.5px;top:603.84px;font-size:12px;color:#000;">(</span><span class="t" style="left:238.2px;top:603.84px;font-size:12px;color:#000;transform:scaleX(1.0988);">&lt;&lt;</span><svg style="left:66px;top:623px" width="17.5" height="18.5"><use href="#i-part" width="17.5" height="18.5"/></svg><svg style="left:47.7px;top:627.5px" width="5" height="8"><path d="M0.3 0.3 L4.6 3.9 L0.3 7.5Z" fill="#555"/></svg><span class="t" style="left:88.5px;top:625.84px;font-size:12px;color:#000;letter-spacing:0.200px;">(-)</span><span class="t" style="left:106.0px;top:625.84px;font-size:12px;color:#000;letter-spacing:-0.086px;">Beam</span><span class="t" style="left:143.0px;top:625.84px;font-size:12px;color:#000;letter-spacing:0.765px;">Support&lt;1&gt;</span><span class="t" style="left:218.6px;top:625.84px;font-size:12px;color:#000;">(</span><span class="t" style="left:247.2px;top:625.84px;font-size:12px;color:#000;transform:scaleX(1.0988);">&lt;&lt;</span><svg style="left:66px;top:645px" width="17.5" height="18.5"><use href="#i-part" width="17.5" height="18.5"/></svg><svg style="left:47.7px;top:649.5px" width="5" height="8"><path d="M0.3 0.3 L4.6 3.9 L0.3 7.5Z" fill="#555"/></svg><span class="t" style="left:88.5px;top:647.84px;font-size:12px;color:#000;letter-spacing:0.200px;">(-)</span><span class="t" style="left:106.0px;top:647.84px;font-size:12px;color:#000;letter-spacing:-0.086px;">Beam</span><span class="t" style="left:143.0px;top:647.84px;font-size:12px;color:#000;letter-spacing:0.765px;">Support&lt;2&gt;</span><span class="t" style="left:218.6px;top:647.84px;font-size:12px;color:#000;">(</span><span class="t" style="left:247.2px;top:647.84px;font-size:12px;color:#000;transform:scaleX(1.0988);">&lt;&lt;</span><svg style="left:66px;top:667px" width="17.5" height="18.5"><use href="#i-part" width="17.5" height="18.5"/></svg><svg style="left:47.7px;top:671.5px" width="5" height="8"><path d="M0.3 0.3 L4.6 3.9 L0.3 7.5Z" fill="#555"/></svg><span class="t" style="left:88.5px;top:669.84px;font-size:12px;color:#000;letter-spacing:0.200px;">(-)</span><span class="t" style="left:106.0px;top:669.84px;font-size:12px;color:#000;letter-spacing:-0.086px;">Beam</span><span class="t" style="left:143.0px;top:669.84px;font-size:12px;color:#000;letter-spacing:0.765px;">Support&lt;3&gt;</span><span class="t" style="left:218.6px;top:669.84px;font-size:12px;color:#000;">(</span><span class="t" style="left:247.2px;top:669.84px;font-size:12px;color:#000;transform:scaleX(1.0988);">&lt;&lt;</span><svg style="left:66px;top:689px" width="17.5" height="18.5"><use href="#i-part" width="17.5" height="18.5"/></svg><svg style="left:47.7px;top:693.5px" width="5" height="8"><path d="M0.3 0.3 L4.6 3.9 L0.3 7.5Z" fill="#555"/></svg><span class="t" style="left:88.5px;top:691.84px;font-size:12px;color:#000;letter-spacing:0.200px;">(-)</span><span class="t" style="left:106.0px;top:691.84px;font-size:12px;color:#000;letter-spacing:-0.086px;">Beam</span><span class="t" style="left:143.0px;top:691.84px;font-size:12px;color:#000;letter-spacing:0.495px;">Support</span><span class="t" style="left:194.0px;top:691.84px;font-size:12px;color:#000;letter-spacing:0.659px;">Rod&lt;1&gt;</span><span class="t" style="left:246.2px;top:691.84px;font-size:12px;color:#000;">(</span><svg style="left:66px;top:711px" width="17.5" height="18.5"><use href="#i-part" width="17.5" height="18.5"/></svg><svg style="left:47.7px;top:715.5px" width="5" height="8"><path d="M0.3 0.3 L4.6 3.9 L0.3 7.5Z" fill="#555"/></svg><span class="t" style="left:88.5px;top:713.84px;font-size:12px;color:#000;letter-spacing:0.200px;">(-)</span><span class="t" style="left:106.0px;top:713.84px;font-size:12px;color:#000;letter-spacing:-0.086px;">Beam</span><span class="t" style="left:143.0px;top:713.84px;font-size:12px;color:#000;letter-spacing:0.495px;">Support</span><span class="t" style="left:194.0px;top:713.84px;font-size:12px;color:#000;letter-spacing:0.659px;">Rod&lt;2&gt;</span><span class="t" style="left:246.2px;top:713.84px;font-size:12px;color:#000;">(</span><svg style="left:66px;top:733px" width="17.5" height="18.5"><use href="#i-part" width="17.5" height="18.5"/></svg><svg style="left:47.7px;top:737.5px" width="5" height="8"><path d="M0.3 0.3 L4.6 3.9 L0.3 7.5Z" fill="#555"/></svg><span class="t" style="left:88.5px;top:735.84px;font-size:12px;color:#000;letter-spacing:0.200px;">(-)</span><span class="t" style="left:106.0px;top:735.84px;font-size:12px;color:#000;letter-spacing:-0.086px;">Beam</span><span class="t" style="left:143.0px;top:735.84px;font-size:12px;color:#000;letter-spacing:0.495px;">Support</span><span class="t" style="left:194.0px;top:735.84px;font-size:12px;color:#000;letter-spacing:0.659px;">Rod&lt;3&gt;</span><span class="t" style="left:246.2px;top:735.84px;font-size:12px;color:#000;">(</span><svg style="left:66px;top:755px" width="16" height="18"><use href="#i-clips" width="16" height="18"/></svg></div>
<svg style="left:0;top:0" width="1155" height="812" font-family="&quot;Liberation Sans&quot;, &quot;Noto Sans CJK SC&quot;, sans-serif"><text x="76.5" y="35.74" font-size="13" fill="#111">插件</text><text x="432" y="7.88" font-size="13.5" fill="#333">导</text><g clip-path="url(#treeclip)" font-size="12" fill="#000"><text x="190.5" y="131.06">默认</text><text x="223.3" y="131.06">显示状态</text><text x="88" y="153.06">注解</text><text x="88" y="175.06">前视基准面</text><text x="88" y="197.06">上视基准面</text><text x="88" y="219.06">右视基准面</text><text x="88" y="241.06">原点</text><text x="271.6" y="263.06">默</text><text x="111.2" y="307.06">注解</text><text x="111.2" y="329.06">前视基准面</text><text x="111.2" y="351.06">上视基准面</text><text x="111.2" y="373.06">右视基准面</text><text x="111.2" y="395.06">原点</text><text x="251.4" y="439.06">默认</text><text x="251.4" y="461.06">默认</text><text x="251.4" y="483.06">默认</text><text x="251.4" y="505.06">默认</text><text x="263.3" y="527.06">默</text><text x="263.3" y="549.06">默</text><text x="111.2" y="571.06">配合</text><text x="237.5" y="593.06">默认</text><text x="213.4" y="615.06">默认</text><text x="254.2" y="615.06">默认</text><text x="222.5" y="637.06">默认</text><text x="263.2" y="637.06">默</text><text x="222.5" y="659.06">默认</text><text x="263.2" y="659.06">默</text><text x="222.5" y="681.06">默认</text><text x="263.2" y="681.06">默</text><text x="250.1" y="703.06">默认</text><text x="250.1" y="725.06">默认</text><text x="250.1" y="747.06">默认</text><text x="88" y="769.06">配合</text></g><g clip-path="url(#botclip)" font-size="13" fill="#1a1a1a"><text x="119" y="815.64">模型</text><text x="176" y="815.64">视图</text><text x="221.5" y="815.64">运动算例</text></g></svg>
<svg style="left:0;top:0" width="1155" height="812" viewBox="0 0 1155 812"><defs>
<radialGradient id="lens" cx="0.4" cy="0.35" r="0.7"><stop offset="0" stop-color="#ffffff"/><stop offset="1" stop-color="#d9dde2"/></radialGradient>
<linearGradient id="cyl" x1="0" y1="0" x2="1" y2="1"><stop offset="0" stop-color="#8a8a8a"/><stop offset="0.45" stop-color="#f2f2f2"/><stop offset="1" stop-color="#8e8e8e"/></linearGradient>
<linearGradient id="blu" x1="0" y1="0" x2="1" y2="1"><stop offset="0" stop-color="#8cc8e4"/><stop offset="1" stop-color="#3d8db8"/></linearGradient>
<linearGradient id="mon" x1="0" y1="0" x2="0" y2="1"><stop offset="0" stop-color="#f2f2f2"/><stop offset="1" stop-color="#cfcfcf"/></linearGradient>
<pattern id="hat" width="2.2" height="2.2" patternUnits="userSpaceOnUse" patternTransform="rotate(-45)"><rect width="2.2" height="2.2" fill="#8cc6e0"/><rect width="1" height="2.2" fill="#2f7fa8"/></pattern>
</defs><path d="M600.7,37.8 L595.2,43.6" stroke="#3f86ae" stroke-width="4" stroke-linecap="round"/><path d="M600.7,37.8 L595.2,43.6" stroke="#79b9d8" stroke-width="2.4" stroke-linecap="round"/><circle cx="604.5" cy="33.3" r="6.2" fill="url(#lens)" stroke="#868686" stroke-width="1.3"/><path d="M604.5,28.6l1.6,1.8h-3.2z M604.5,38l1.6,-1.8h-3.2z M599.8,33.3l1.8,-1.6v3.2z M609.2,33.3l-1.8,-1.6v3.2z" fill="#3c3c3c"/><rect x="602.3" y="31.1" width="4.4" height="4.4" fill="#e3e8ee" stroke="#b4bac2" stroke-width="0.5"/><rect x="624.7" y="27.5" width="12" height="11.8" fill="none" stroke="#4a4a4a" stroke-width="1.1" stroke-dasharray="2.4 1.6"/><path d="M624.8,39.8 L620.0,44.2" stroke="#3f86ae" stroke-width="4" stroke-linecap="round"/><path d="M624.8,39.8 L620.0,44.2" stroke="#79b9d8" stroke-width="2.4" stroke-linecap="round"/><circle cx="628.6" cy="35.4" r="6.1" fill="url(#lens)" stroke="#868686" stroke-width="1.3"/><g transform="translate(654.5,35) rotate(-40)"><path d="M-8.5,-3.6 L2,-3.6 L3.5,-2.4 L9,-2.4 L9,2.4 L3.5,2.4 L2,3.6 L-8.5,3.6Z" fill="url(#cyl)" stroke="#7a7a7a" stroke-width="0.8"/><ellipse cx="-8.5" cy="0" rx="1.8" ry="3.6" fill="#e8e8e8" stroke="#7a7a7a" stroke-width="0.8"/><ellipse cx="-8.5" cy="0" rx="0.9" ry="2" fill="#bdbdbd"/></g><path d="M663.2,39.2 H658.2 V37.2 L653.6,40.4 L658.2,43.6 V41.6 H663.2Z" fill="#4b97c2"/><path d="M671.6,32.5 Q680,25.5 688.6,31 L688.6,41 Q686,43.6 683.4,42 L683.4,33.5 Q680,31.8 677,33.8 L677,44.2 Q673.5,44.8 671.6,43Z" fill="#dcdcdc" stroke="#6f6f6f" stroke-width="0.9"/><path d="M672.2,33.6 L676.6,34.6 L676.6,43.8 L672.2,42.6Z" fill="url(#hat)" stroke="#2f7fa8" stroke-width="0.6"/><path d="M683.8,33.6 L688.2,32 L688.2,40.8 L683.8,41.8Z" fill="url(#hat)" stroke="#2f7fa8" stroke-width="0.6"/><path d="M677,33.8 Q680,31.8 683.4,33.5 L683.4,42 Q680,40 677,42Z" fill="url(#cyl)"/><g transform="translate(705,36.5) rotate(-40)"><path d="M-8.5,-3.6 L2,-3.6 L3.5,-2.4 L9,-2.4 L9,2.4 L3.5,2.4 L2,3.6 L-8.5,3.6Z" fill="url(#cyl)" stroke="#7a7a7a" stroke-width="0.8"/><ellipse cx="-8.5" cy="0" rx="1.8" ry="3.6" fill="#e8e8e8" stroke="#7a7a7a" stroke-width="0.8"/><ellipse cx="-8.5" cy="0" rx="0.9" ry="2" fill="#bdbdbd"/></g><path d="M702,27 L708,27 L705,31 L708.5,31 L700,37 L702.6,32.4 L699.4,32.4Z" fill="#3e3e3e"/><text x="710.6" y="45.6" font-family="Liberation Serif" font-weight="bold" font-size="12.5" text-anchor="middle" fill="#3b88b3">A</text><path d="M725.2,31 L730.5,27.8 L741,30.2 L741,41.6 L735.2,44.6 L725.2,42.2Z" fill="#f4f4f4" stroke="#6f6f6f" stroke-width="0.9" stroke-linejoin="round"/><path d="M729,33.2 L740.6,31.2 L740.6,41.4 L729,43.6Z" fill="url(#blu)" stroke="#3b82a8" stroke-width="0.6"/><path d="M725.2,31 L735.4,33.2 L741,30.2" fill="none" stroke="#6f6f6f" stroke-width="0.8"/><path d="M732.6,26.6v4.2m-1.8,-1.6l1.8,2.2l1.8,-2.2" fill="none" stroke="#333" stroke-width="1.1"/><path d="M723.6,36.4h4.2m-1.6,-1.8l2.2,1.8l-2.2,1.8" fill="none" stroke="#333" stroke-width="1.1"/><path d="M748.4,34.7h6l-3,3.4z" fill="#8a8a8a"/><path d="M764.2,30 L773.5,26.8 L781,29.2 L781,40.8 L772,44.2 L764.2,41.6Z" fill="#f6f6f6" stroke="#6f6f6f" stroke-width="0.9" stroke-linejoin="round"/><path d="M764.6,30.4 L772,32.6 L772,43.8 L764.6,41.4Z" fill="url(#blu)"/><path d="M772,32.6 L776,31.4 L776,42.4 L772,43.8Z" fill="#a8d4e8"/><path d="M764.2,30 L772,32.6 L781,29.2 M772,32.6 V44" fill="none" stroke="#6f6f6f" stroke-width="0.8"/><path d="M788.2,34.7h6l-3,3.4z" fill="#8a8a8a"/><path d="M803,36.4 Q812,27.4 821,36.4 Q812,44.4 803,36.4Z" fill="#efefef" stroke="#9a9a9a" stroke-width="1.1"/><circle cx="812" cy="35.8" r="3.6" fill="#8a8a8a"/><circle cx="812" cy="35.8" r="1.6" fill="#4a4a4a"/><path d="M812,29.6 V44.6" stroke="#5a5a5a" stroke-width="1.1"/><path d="M828.4,34.7h6l-3,3.4z" fill="#8a8a8a"/><g><clipPath id="bc851"><circle cx="851.0" cy="34.2" r="8.0"/></clipPath><g clip-path="url(#bc851)"><rect x="843.0" y="26.200000000000003" width="16.0" height="16.0" fill="#e9c338"/><path d="M843.0,26.200000000000003 H851.5 L850.5,34.7 L843.0,36.2Z" fill="#3f79c9"/><path d="M851.5,26.200000000000003 H859.0 V36.2 L850.5,34.7Z" fill="#d64b3c"/><path d="M843.0,36.2 L850.5,34.7 L854.6,42.2 H843.0Z" fill="#4aa84a"/><circle cx="848.6" cy="31.400000000000002" r="6.0" fill="#fff" opacity="0.22"/></g><circle cx="851.0" cy="34.2" r="8.0" fill="none" stroke="#6a6a6a" stroke-width="0.5" opacity="0.6"/></g><path d="M849.6,45.6 L851,41.4 L858.6,33.4 L861.4,36 L853.6,43.8Z" fill="#5fa9d3" stroke="#3a3a3a" stroke-width="0.8" stroke-linejoin="round"/><path d="M849.6,45.6 L851,41.4 L853.6,43.8Z" fill="#f1d9a8" stroke="#3a3a3a" stroke-width="0.6"/><path d="M857.2,34.8l2.8,2.6" stroke="#3a3a3a" stroke-width="0.7"/><g><clipPath id="bc877"><circle cx="877.4" cy="33.4" r="7.4"/></clipPath><g clip-path="url(#bc877)"><rect x="870.0" y="26.0" width="14.8" height="14.8" fill="#e9c338"/><path d="M870.0,26.0 H877.9 L876.9,33.9 L870.0,35.4Z" fill="#3f79c9"/><path d="M877.9,26.0 H884.8 V35.4 L876.9,33.9Z" fill="#d64b3c"/><path d="M870.0,35.4 L876.9,33.9 L880.73,40.8 H870.0Z" fill="#4aa84a"/><circle cx="875.18" cy="30.81" r="5.550000000000001" fill="#fff" opacity="0.22"/></g><circle cx="877.4" cy="33.4" r="7.4" fill="none" stroke="#6a6a6a" stroke-width="0.5" opacity="0.6"/></g><path d="M868.6,36.6 H872 Q877.4,41.4 883,36.6 H886.8 V45.4 H868.6Z" fill="#2d2d2d"/><path d="M870,38h2v2h-2zM870,42h2v2h-2zM883.4,38h2v2h-2zM883.4,42h2v2h-2zM874.6,42.2h2.2v2h-2.2zM878.8,42.2h2.2v2h-2.2z" fill="#f4f4f4"/><path d="M894.2,34.7h6l-3,3.4z" fill="#8a8a8a"/><rect x="909.6" y="28.2" width="17.8" height="11.6" fill="url(#mon)" stroke="#6b6b6b" stroke-width="1.2"/><path d="M917.4,39.8h2.2v2.6h-2.2z" fill="#4a4a4a"/><path d="M914.4,42.4h8.4v1.4h-8.4z" fill="#3a3a3a"/><path d="M934.4,34.7h6l-3,3.4z" fill="#8a8a8a"/><rect x="1130.6" y="29.8" width="10.8" height="12.4" fill="#e9ebf1" stroke="#8a8a8a" stroke-width="1.1"/><path d="M1130.6,30.6h10.8" stroke="#8a8a8a" stroke-width="1.6"/><path d="M1135.4,33.6 V39.6 L1131.8,36.6Z" fill="#7a7a7a"/><path d="M318.4,744.6 L302,752.4" stroke="#a81414" stroke-width="4.2"/><path d="M296.6,754.6 L303.6,747.2 L306.8,755.6Z" fill="#d81e1e"/><path d="M318.4,744.6 L333.6,751.8" stroke="#17601a" stroke-width="4.2"/><path d="M339.4,754.2 L329.6,755.2 L333.2,746.6Z" fill="#1f8a2a"/><path d="M318.4,746.4 V725.6" stroke="#1414b0" stroke-width="4.8"/><path d="M318.4,717.8 L323.2,727 H313.6Z" fill="#2424d8"/><path d="M318.2,718.8 L319.6,726.4 H317.2Z" fill="#9a9aff"/><text x="313.2" y="716.2" font-family="Liberation Serif" font-weight="bold" font-size="10" fill="#1414e8" textLength="6.2" lengthAdjust="spacingAndGlyphs">Z</text><text x="291.8" y="758.6" font-family="Liberation Serif" font-weight="bold" font-size="10" fill="#e81414" textLength="5.6" lengthAdjust="spacingAndGlyphs">X</text><text x="339.4" y="757.6" font-family="Liberation Serif" font-weight="bold" font-size="10" fill="#14861e" textLength="5.6" lengthAdjust="spacingAndGlyphs">Y</text><use href="#i-asm" x="52" y="68.6" width="17.5" height="18.5"/><rect x="91.2" y="69.6" width="17.2" height="16.6" rx="1.4" fill="#fdfdfd" stroke="#1f5f85" stroke-width="1.1"/><path d="M91.2,71 Q91.2,69.6 92.6,69.6 H107 Q108.4,69.6 108.4,71 V73 H91.2Z" fill="#4a9ec9"/><path d="M93.6,75.6h3.4v2h-3.4zM93.6,79.2h3.4v2h-3.4zM93.6,82.8h3.4v2h-3.4z" fill="#3e8fbb" stroke="#1f5f85" stroke-width="0.5"/><path d="M98.6,76.6h7.6M98.6,80.2h7.6M98.6,83.8h7.6" stroke="#444" stroke-width="1"/><path d="M133.4,69.8 V86.4 M133.4,69.8 H136.4 M133.4,86.4 H136 M136,73.2 H138.6 M136.6,82.8 H141.6 M136.2,69.8 V86" fill="none" stroke="#3a3a3a" stroke-width="1.1"/><rect x="138.4" y="70" width="6" height="5.8" rx="0.8" fill="#fbfbfb" stroke="#3a3a3a" stroke-width="1"/><rect x="141.4" y="80" width="5.4" height="5.6" rx="0.8" fill="#fbfbfb" stroke="#3a3a3a" stroke-width="1"/><path d="M141.4,75.8 V78 H138.6 V80" fill="none" stroke="#3a3a3a" stroke-width="1"/><circle cx="179.7" cy="77.6" r="5.9" fill="none" stroke="#1e1e1e" stroke-width="1.9"/><path d="M179.7,68.2V87M170.3,77.6H189.1" stroke="#1e1e1e" stroke-width="1.9"/><g><clipPath id="dmb"><circle cx="220" cy="77" r="9.2"/></clipPath><g clip-path="url(#dmb)">
<rect x="210" y="67" width="20" height="20" fill="#f0c419"/>
<path d="M210,67 H221 L218.4,77.4 L210,80Z" fill="#3b74c9"/>
<path d="M221,67 H231 V79 L218.4,77.4Z" fill="#d63a2f"/>
<path d="M210,80 L218.4,77.4 L222,88 H210Z" fill="#3fa845"/>
<path d="M218.4,77.4 L231,79 V88 H222Z" fill="#f2c21a"/>
<ellipse cx="223.6" cy="73.4" rx="2.6" ry="5" transform="rotate(-35 223.6 73.4)" fill="#1a1a1a"/>
<circle cx="216.5" cy="72.5" r="6.5" fill="#fff" opacity="0.08"/></g>
<circle cx="220" cy="77" r="9.2" fill="none" stroke="#5a5a5a" stroke-width="0.5" opacity="0.7"/></g><path d="M264.6,72.6 L269.4,77.2 L264.6,81.8" fill="none" stroke="#555" stroke-width="2.1"/><path d="M46.4,97.6 L53,105.2 V111.8 L55.6,112.8 V105.2 L62.4,97.6Z" fill="#fafafa" stroke="#3a3a3a" stroke-width="1" stroke-linejoin="round"/><ellipse cx="54.4" cy="96.9" rx="8.2" ry="1.9" fill="#56aad6" stroke="#1f6d98" stroke-width="0.9"/><path d="M64.6,105.6h4.6l-2.3,2.6z" fill="#333"/><g><circle cx="6.7" cy="69" r="5.1" fill="none" stroke="#1e1e1e" stroke-width="1.9"/><path d="M6.7,61V77.7M-1,69H15.8" stroke="#1e1e1e" stroke-width="1.8"/><path d="M10.2,60.4 L16.4,59.9 L12.8,64.2 L15.8,64.2 L7.2,72 L10,66.6 L7.2,66.6Z" fill="#444" stroke="#f7f7f7" stroke-width="0.5"/><rect x="0.8" y="85.6" width="12.8" height="13" rx="1" fill="#fff" stroke="#2a2a2a" stroke-width="1.2"/><text x="7.3" y="96.5" font-family="Liberation Sans" font-weight="bold" font-size="12.4" text-anchor="middle" fill="#1e1e1e">A</text><path d="M6.9,99.4 L10,103.4 H3.8Z" fill="#1e1e1e"/><text x="-1.6" y="116.6" font-family="Liberation Sans" font-weight="bold" font-size="7.6" fill="#2a2a2a" letter-spacing="0">xxx</text><rect x="-3" y="119.2" width="18.6" height="10.8" rx="1.5" fill="url(#blu)" stroke="#1f648c" stroke-width="1"/><path d="M9,115.2 H10.4 V122" fill="none" stroke="#222" stroke-width="1"/><circle cx="10.3" cy="124.2" r="2.6" fill="#fff" stroke="#222" stroke-width="1.3"/><text x="3.6" y="142.8" font-family="Liberation Sans" font-weight="bold" font-size="7.6" fill="#2a2a2a">xxx</text><path d="M-1,140.4 H2.8 M-0.4,141.6 L3,146.8" fill="none" stroke="#222" stroke-width="0.9"/><rect x="-2" y="145.4" width="12.6" height="10.4" rx="1" fill="url(#blu)" stroke="#1f648c" stroke-width="1"/><circle cx="5.4" cy="150.6" r="3" fill="#ececec" stroke="#333" stroke-width="1.1"/><rect x="-2" y="169.4" width="18.6" height="8.2" fill="#fdfdfd" stroke="#222" stroke-width="1"/><path d="M7.4,169.4V177.6" stroke="#222" stroke-width="1"/><path d="M5,171.6 H1.4 Q-0.4,173.5 1.4,175.4 H5" fill="none" stroke="#222" stroke-width="0.9"/><text x="12" y="176.6" font-family="Liberation Sans" font-weight="bold" font-size="6.6" text-anchor="middle" fill="#222">0.3</text><path d="M3.1000000000000005,199.1 V195.1 Q3.1000000000000005,191.1 6.9,191.1 Q10.7,191.1 10.7,195.1 V199.1 Q9.100000000000001,196.7 6.9,196.7 Q4.7,196.7 3.1000000000000005,199.1Z" fill="#4a9acb" stroke="#1f5f8a" stroke-width="0.9"/><path d="M4.7,194.5 Q5.1000000000000005,192.29999999999998 7.5,192.1" fill="none" stroke="#bfe2f3" stroke-width="1"/><path d="M-1.5999999999999996,208 V204 Q-1.5999999999999996,200 2.2,200 Q6.0,200 6.0,204 V208 Q4.4,205.6 2.2,205.6 Q0.0,205.6 -1.5999999999999996,208Z" fill="#4a9acb" stroke="#1f5f8a" stroke-width="0.9"/><path d="M0.0,203.4 Q0.40000000000000013,201.2 2.8000000000000003,201" fill="none" stroke="#bfe2f3" stroke-width="1"/><path d="M8.2,208 V204 Q8.2,200 12,200 Q15.8,200 15.8,204 V208 Q14.2,205.6 12,205.6 Q9.8,205.6 8.2,208Z" fill="#4a9acb" stroke="#1f5f8a" stroke-width="0.9"/><path d="M9.8,203.4 Q10.2,201.2 12.6,201" fill="none" stroke="#bfe2f3" stroke-width="1"/><g stroke="#cdcdcd" fill="none" stroke-width="1.1"><circle cx="9.8" cy="227" r="3.4"/><path d="M9.8,220.6V233.4M3.4,227H16.2"/><circle cx="2.2" cy="222.6" r="2.6"/><path d="M2.2,218V227.2M-2,222.6H6.8"/></g><path d="M2.6,243v8M-1.4,247h8" stroke="#c4c4c4" stroke-width="2"/><path d="M-1,253.4h8" stroke="#c4c4c4" stroke-width="1.4"/><path d="M5.4,255.8 Q10.4,250.6 15.6,255.8 Q10.4,260.6 5.4,255.8Z" fill="#ececec" stroke="#c4c4c4" stroke-width="1"/><circle cx="10.4" cy="255.6" r="1.8" fill="#c4c4c4"/><circle cx="9" cy="275.4" r="7.2" fill="#fcfcfc" stroke="#3a3a3a" stroke-width="1"/><path d="M1.9,274H16.1" stroke="#3a3a3a" stroke-width="0.9"/><text x="9" y="281.2" font-family="Liberation Sans" font-weight="bold" font-size="6.8" text-anchor="middle" fill="#222">A1</text><path d="M3.4,280.4 L-1,284.4" stroke="#222" stroke-width="1.8"/><path d="M-0.6,301.4 L3.2,309.8 L9.8,295.4 H16.2" fill="none" stroke="#1e1e1e" stroke-width="1.5"/><path d="M-0.6,301.4H5" stroke="#1e1e1e" stroke-width="1.1"/><path d="M-1,330.6 L4,325.6 L8,330.8 L15.6,323.6 M8,330.8 L16,330.8 M12.6,322 L16,323.4 L14,326.4" fill="none" stroke="#1e1e1e" stroke-width="1.4"/><path d="M4,325.6 H13" stroke="#1e1e1e" stroke-width="1.2"/><text x="7.6" y="363.2" font-family="Liberation Serif" font-weight="bold" font-size="25" text-anchor="middle" fill="#2d86b5">A</text><path d="M-1,382 L7.6,390.8 M9,372.6 L16.2,379.8" stroke="#2d7fb0" stroke-width="1.7"/><path d="M1.4,380.4 L8,374" stroke="#1a1a1a" stroke-width="1.6"/><path d="M9.6,372.4 L8.6,377.2 L5,373.6Z M0,382 L1,377.6 L4.6,381Z" fill="#1a1a1a"/><rect x="-2" y="398.6" width="17.6" height="16.6" fill="#fdfdfd" stroke="#3a3a3a" stroke-width="1"/><rect x="-2" y="398.6" width="17.6" height="3.6" fill="#4a9acb" stroke="#1f5f8a" stroke-width="0.8"/><path d="M-2,406.6H15.6M-2,410.8H15.6M3.8,402.2V415.2M9.8,402.2V415.2" stroke="#6a6a6a" stroke-width="0.9"/><path d="M28.2,404.6h5l-2.5,3z" fill="#333"/><path d="M0,422.4H38" stroke="#b8b8b8" stroke-width="1"/><text x="-1.4" y="439.6" font-family="Liberation Sans" font-weight="bold" font-size="9.5" fill="#2d86b5">3D</text><rect x="1.6" y="439.6" width="13.6" height="9.8" rx="1" fill="#d9d9d9" stroke="#3a3a3a" stroke-width="1"/><circle cx="9.6" cy="444.6" r="3.1" fill="#8a8a8a" stroke="#2a2a2a" stroke-width="0.9"/><circle cx="9.6" cy="444.6" r="1.3" fill="#e8e8e8"/><path d="M11.6,437.4h3v2.2h-3z" fill="#555"/><path d="M-2,464 Q7,456 16,462 L16,471 Q13.6,473.6 11,472 L11,465 Q8,463.4 5,465.2 L5,476 Q1,476.6 -2,474.6Z" fill="#d6d6d6" stroke="#4f4f4f" stroke-width="0.9"/><path d="M-2,465 L4.6,466 L4.6,475.6 L-2,474.2Z" fill="url(#hat)" stroke="#2f7fa8" stroke-width="0.6"/><path d="M11.4,465 L15.6,463.4 L15.6,470.6 L11.4,471.8Z" fill="url(#hat)" stroke="#2f7fa8" stroke-width="0.6"/><path d="M-2,485.2 H5.6 L3.6,491 L6.6,493.4 L4.6,500.6 H-2Z M9.4,485.2 H14.6 V500.6 H8.4 L10.4,493.6 L7.4,491.2Z" fill="#fbfbfb" stroke="#2a2a2a" stroke-width="1.1"/><path d="M-2,519.4 L3,517 L3,520.6 L8.4,522.8 L8.4,527.4 L4.4,529.6 L-2,527Z" fill="#e2e2e2" stroke="#555" stroke-width="0.9"/><path d="M9,519.4 L12.4,515.6" stroke="#333" stroke-width="1" stroke-dasharray="1.6 1.2"/><path d="M11.6,511.6 L14.2,510.6 L16.4,511.6 L16.4,514.8 L13.8,516 L11.6,514.8Z" fill="#4a9acb" stroke="#1f5f8a" stroke-width="0.7"/><g transform="translate(5.2,546.4) rotate(-40)"><path d="M-7.5,-3.4 L2,-3.4 L3.4,-2.2 L8,-2.2 L8,2.2 L3.4,2.2 L2,3.4 L-7.5,3.4Z" fill="url(#cyl)" stroke="#6a6a6a" stroke-width="0.8"/><ellipse cx="-7.5" cy="0" rx="1.7" ry="3.4" fill="#e2e2e2" stroke="#6a6a6a" stroke-width="0.8"/></g><path d="M2,535.6 L8,535.2 L5,539.4 L8.4,539.4 L0,546 L2.6,541 L-0.6,541Z" fill="#333"/><text x="11.6" y="555.4" font-family="Liberation Serif" font-weight="bold" font-size="12.5" text-anchor="middle" fill="#2d86b5">A</text><path d="M0,561H38" stroke="#b8b8b8" stroke-width="1"/><path d="M1.6,571.8 H10.4 L14.6,575.8 V588.4 H1.6Z" fill="#fbfbfb" stroke="#4a4a4a" stroke-width="0.9"/><text x="11.2" y="580.8" font-family="Liberation Sans" font-weight="bold" font-size="7.6" text-anchor="middle" fill="#333">3D</text><rect x="2.6" y="581.4" width="13.6" height="6.4" fill="#e0262c"/><text x="9.4" y="587.0" font-family="Liberation Sans" font-weight="bold" font-size="6.4" text-anchor="middle" fill="#fff">PDF</text><path d="M-1,577.4 L5.6,570.0 L8.6,572.6 L2,580.0Z" fill="#4a9acb" stroke="#2a2a2a" stroke-width="0.8"/><circle cx="8.4" cy="570.0" r="1.6" fill="#bbb" stroke="#333" stroke-width="0.6"/><path d="M1.6,596.4 H10.4 L14.6,600.4 V613.0 H1.6Z" fill="#fbfbfb" stroke="#4a4a4a" stroke-width="0.9"/><text x="11.2" y="605.4" font-family="Liberation Sans" font-weight="bold" font-size="7.6" text-anchor="middle" fill="#333">3D</text><rect x="2.6" y="606.0" width="13.6" height="6.4" fill="#e0262c"/><text x="9.4" y="611.6" font-family="Liberation Sans" font-weight="bold" font-size="6.4" text-anchor="middle" fill="#fff">PDF</text><path d="M-1,601.6 H3.6 V599.2 L8.2,602.8 L3.6,606.4 V604.0 H-1Z" fill="#2d86b5"/><text x="9.4" y="638.9" font-family="Liberation Sans" font-size="27" text-anchor="middle" fill="#8db63a" stroke="#8db63a" stroke-width="0.6">e</text><path d="M-1,628H3M-1,632H2.4M-1,636H3" stroke="#444" stroke-width="1"/><path d="M0,651.5H38" stroke="#b8b8b8" stroke-width="1"/></g></svg>
</div></body></html>
